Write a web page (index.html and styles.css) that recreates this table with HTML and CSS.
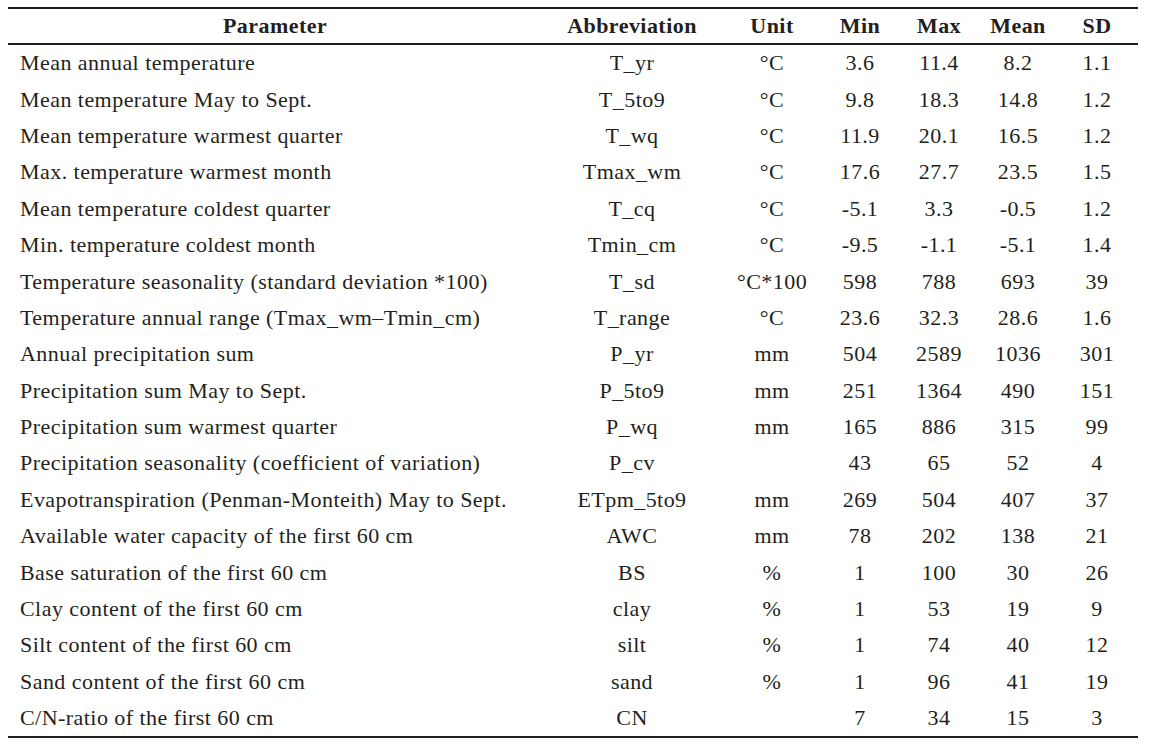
FILE: index.html
```html
<!DOCTYPE html>
<html lang="en">
<head>
<meta charset="utf-8">
<title>Parameters</title>
<link rel="stylesheet" href="styles.css">
</head>
<body>
<table class="data">
  <colgroup>
    <col class="c-param"><col class="c-abbr"><col class="c-unit"><col class="c-min"><col class="c-max"><col class="c-mean"><col class="c-sd">
  </colgroup>
  <thead>
    <tr><th>Parameter</th><th>Abbreviation</th><th>Unit</th><th>Min</th><th>Max</th><th>Mean</th><th>SD</th></tr>
  </thead>
  <tbody>
    <tr><td>Mean annual temperature</td><td>T_yr</td><td>°C</td><td>3.6</td><td>11.4</td><td>8.2</td><td>1.1</td></tr>
    <tr><td>Mean temperature May to Sept.</td><td>T_5to9</td><td>°C</td><td>9.8</td><td>18.3</td><td>14.8</td><td>1.2</td></tr>
    <tr><td>Mean temperature warmest quarter</td><td>T_wq</td><td>°C</td><td>11.9</td><td>20.1</td><td>16.5</td><td>1.2</td></tr>
    <tr><td>Max. temperature warmest month</td><td>Tmax_wm</td><td>°C</td><td>17.6</td><td>27.7</td><td>23.5</td><td>1.5</td></tr>
    <tr><td>Mean temperature coldest quarter</td><td>T_cq</td><td>°C</td><td>-5.1</td><td>3.3</td><td>-0.5</td><td>1.2</td></tr>
    <tr><td>Min. temperature coldest month</td><td>Tmin_cm</td><td>°C</td><td>-9.5</td><td>-1.1</td><td>-5.1</td><td>1.4</td></tr>
    <tr><td>Temperature seasonality (standard deviation *100)</td><td>T_sd</td><td>°C*100</td><td>598</td><td>788</td><td>693</td><td>39</td></tr>
    <tr><td>Temperature annual range (Tmax_wm–Tmin_cm)</td><td>T_range</td><td>°C</td><td>23.6</td><td>32.3</td><td>28.6</td><td>1.6</td></tr>
    <tr><td>Annual precipitation sum</td><td>P_yr</td><td>mm</td><td>504</td><td>2589</td><td>1036</td><td>301</td></tr>
    <tr><td>Precipitation sum May to Sept.</td><td>P_5to9</td><td>mm</td><td>251</td><td>1364</td><td>490</td><td>151</td></tr>
    <tr><td>Precipitation sum warmest quarter</td><td>P_wq</td><td>mm</td><td>165</td><td>886</td><td>315</td><td>99</td></tr>
    <tr><td>Precipitation seasonality (coefficient of variation)</td><td>P_cv</td><td></td><td>43</td><td>65</td><td>52</td><td>4</td></tr>
    <tr><td>Evapotranspiration (Penman-Monteith) May to Sept.</td><td>ETpm_5to9</td><td>mm</td><td>269</td><td>504</td><td>407</td><td>37</td></tr>
    <tr><td>Available water capacity of the first 60 cm</td><td>AWC</td><td>mm</td><td>78</td><td>202</td><td>138</td><td>21</td></tr>
    <tr><td>Base saturation of the first 60 cm</td><td>BS</td><td>%</td><td>1</td><td>100</td><td>30</td><td>26</td></tr>
    <tr><td>Clay content of the first 60 cm</td><td>clay</td><td>%</td><td>1</td><td>53</td><td>19</td><td>9</td></tr>
    <tr><td>Silt content of the first 60 cm</td><td>silt</td><td>%</td><td>1</td><td>74</td><td>40</td><td>12</td></tr>
    <tr><td>Sand content of the first 60 cm</td><td>sand</td><td>%</td><td>1</td><td>96</td><td>41</td><td>19</td></tr>
    <tr><td>C/N-ratio of the first 60 cm</td><td>CN</td><td></td><td>7</td><td>34</td><td>15</td><td>3</td></tr>
  </tbody>
</table>
</body>
</html>
```

FILE: styles.css
```css
html, body {
  background: #ffffff;
}
body {
  margin: 0;
  padding: 7px 0 0 8px;
  font-family: "Liberation Serif", "Times New Roman", serif;
  font-size: 22px;
  letter-spacing: 0.45px;
  color: #231f20;
}
.data {
  width: 1130px;
  border-collapse: collapse;
  table-layout: fixed;
  border-top: 2px solid #231f20;
  border-bottom: 2px solid #231f20;
}
.c-param { width: 534px; }
.c-abbr { width: 180px; }
.c-unit { width: 100px; }
.c-min { width: 76px; }
.c-max { width: 82px; }
.c-mean { width: 76px; }
.c-sd { width: 82px; }
.data th {
  font-weight: bold;
  text-align: center;
  height: 34px;
  padding: 0;
  border-bottom: 2px solid #231f20;
  vertical-align: middle;
}
.data td {
  height: 36.4px;
  padding: 0;
  text-align: center;
  vertical-align: middle;
  white-space: nowrap;
}
.data td:first-child {
  text-align: left;
  padding-left: 12px;
}
```
